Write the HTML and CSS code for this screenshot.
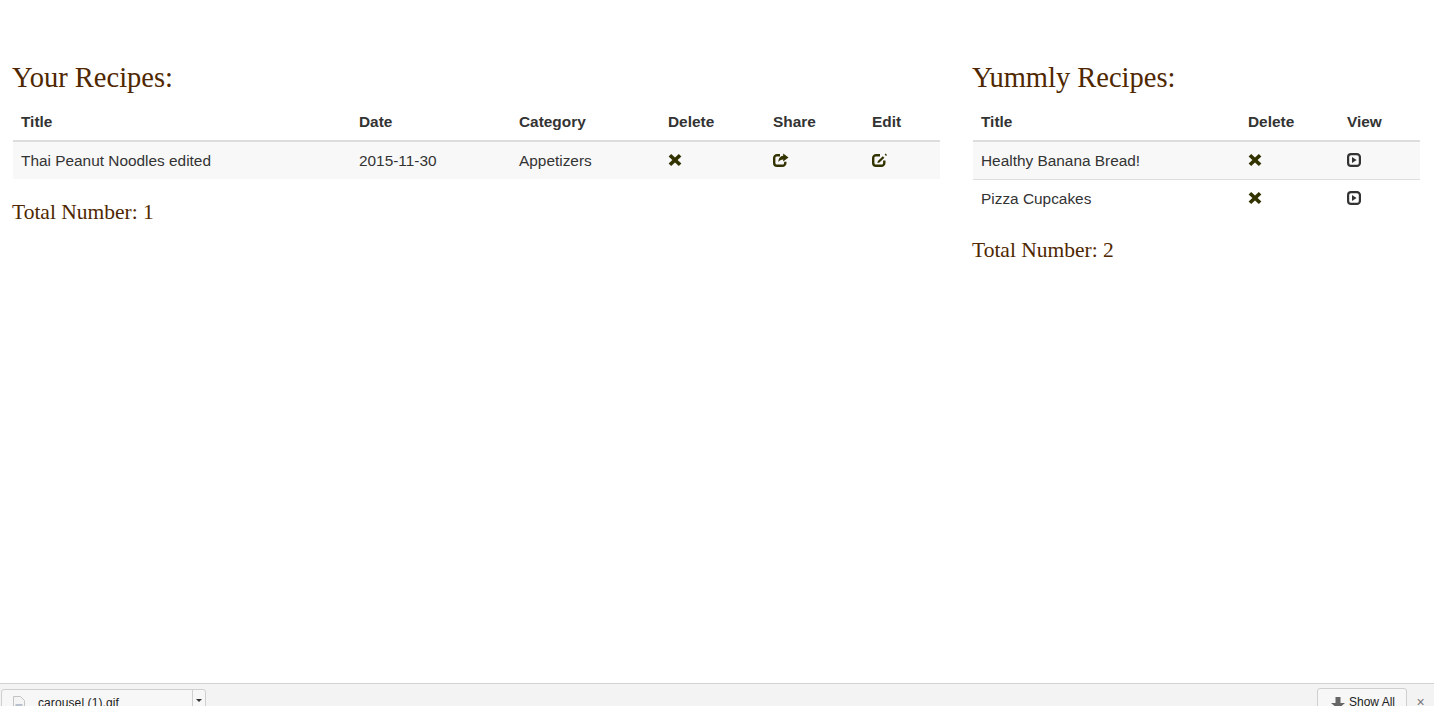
FILE: index.html
```html
<!DOCTYPE html>
<html lang="en">
<head>
<meta charset="utf-8">
<title>Recipes</title>
<link rel="stylesheet" href="styles.css">
</head>
<body>
<svg class="defs" width="0" height="0" aria-hidden="true">
  <symbol id="i-x" viewBox="0 0 14 14"><path d="M3.2 1 7 4.6 10.8 1 13.4 3.4 9.6 7l3.8 3.6-2.6 2.4L7 9.4 3.2 13 .6 10.6 4.4 7 .6 3.4z"/></symbol>
  <symbol id="i-share" viewBox="0 0 16 14"><path d="M7 2.2H4A2.8 2.8 0 0 0 1.2 5v5A2.8 2.8 0 0 0 4 12.800h5.500A2.800 2.800 0 0 0 12.300 10V8.800" fill="none" stroke="currentColor" stroke-width="2.400"/><path d="M10.200 .4 15.500 4.500 10.200 8.600V6.400C8 6.400 6.500 7.200 5.400 9 5.400 5.600 7.200 3 10.200 2.800z"/></symbol>
  <symbol id="i-edit" viewBox="0 0 16 14"><path d="M8 2.200H4A2.800 2.800 0 0 0 1.200 5v5A2.800 2.800 0 0 0 4 12.800h5.500A2.800 2.800 0 0 0 12.300 10V7.500" fill="none" stroke="currentColor" stroke-width="2.400"/><path d="M10.800 3.200 12.400 4.700 7.500 9.500 5.400 10 5.900 8z"/><path d="M13.600 .6 15 2 14 3 12.700 1.600z"/></symbol>
  <symbol id="i-view" viewBox="0 0 14 14"><rect x="1.100" y="1.100" width="11.800" height="11.800" rx="3" fill="none" stroke="currentColor" stroke-width="2.200"/><path d="M5 4 9.600 7 5 10z"/></symbol>
</svg>
<main class="page">
  <section class="panel panel-left">
    <h2 class="panel-title">Your Recipes:</h2>
    <table class="recipes">
      <colgroup><col class="c-title"><col class="c-date"><col class="c-cat"><col class="c-del"><col class="c-share"><col></colgroup>
      <thead><tr><th>Title</th><th>Date</th><th>Category</th><th>Delete</th><th>Share</th><th>Edit</th></tr></thead>
      <tbody>
        <tr class="odd">
          <td>Thai Peanut Noodles edited</td><td>2015-11-30</td><td>Appetizers</td>
          <td><svg class="icon icon-x"><use href="#i-x"/></svg></td>
          <td><svg class="icon icon-wide"><use href="#i-share"/></svg></td>
          <td><svg class="icon icon-wide"><use href="#i-edit"/></svg></td>
        </tr>
      </tbody>
    </table>
    <p class="total">Total Number: 1</p>
  </section>
  <section class="panel panel-right">
    <h2 class="panel-title">Yummly Recipes:</h2>
    <table class="recipes">
      <colgroup><col class="c-ytitle"><col class="c-ydel"><col></colgroup>
      <thead><tr><th>Title</th><th>Delete</th><th>View</th></tr></thead>
      <tbody>
        <tr class="odd">
          <td>Healthy Banana Bread!</td>
          <td><svg class="icon icon-x"><use href="#i-x"/></svg></td>
          <td><svg class="icon icon-view"><use href="#i-view"/></svg></td>
        </tr>
        <tr>
          <td>Pizza Cupcakes</td>
          <td><svg class="icon icon-x"><use href="#i-x"/></svg></td>
          <td><svg class="icon icon-view"><use href="#i-view"/></svg></td>
        </tr>
      </tbody>
    </table>
    <p class="total">Total Number: 2</p>
  </section>
</main>
<footer class="downloads">
  <div class="chip file-chip">
    <svg class="file-icon" viewBox="0 0 12 18"><path d="M.5.500h7l4 4v13H.5z" fill="#f4f4f4" stroke="#c4c4c4"/><rect x="2.500" y="8" width="7" height="7" fill="#b7c0cc"/></svg>
    <span class="file-name">carousel (1).gif</span>
    <span class="file-menu"><span class="caret"></span></span>
  </div>
  <div class="bar-right">
    <div class="chip show-all">
      <svg class="dl-icon" viewBox="0 0 14 14"><path d="M4.500 0h5v6H14L7 12 0 6h4.500z" fill="#666"/></svg>
      <span>Show All</span>
    </div>
    <span class="bar-close">×</span>
  </div>
</footer>
</body>
</html>
```
FILE: styles.css
```css
* { box-sizing: border-box; }
html, body { height: 100%; }
body {
  margin: 0;
  height: 706px;
  overflow: hidden;
  display: flex;
  flex-direction: column;
  background: #fff;
  font-family: "Liberation Sans", Arial, sans-serif;
  color: #333;
}
.defs { display: block; height: 0; }
.page {
  flex: 1;
  display: flex;
  gap: 32px;
  padding: 62px 14px 0 12px;
}
.panel-left { width: 928px; }
.panel-right { width: 448px; }
.panel-title {
  margin: 0 0 10px;
  font-family: "Liberation Serif", Georgia, serif;
  font-weight: 400;
  font-size: 28.500px;
  line-height: 31px;
  color: #4f2700;
}
.recipes {
  width: calc(100% - 1px);
  margin-left: 1px;
  border-collapse: collapse;
  table-layout: fixed;
  font-size: 15.400px;
  line-height: 21px;
}
.recipes th {
  text-align: left;
  font-weight: 700;
  padding: 8px 8px 8px;
  height: 38px;
  border-bottom: 2px solid #ddd;
}
.recipes td {
  padding: 8px;
  height: 38px;
  border-top: 1px solid #ddd;
  vertical-align: top;
}
.recipes thead + tbody tr:first-child td { border-top: 0; height: 37px; }
.recipes .odd { background: #f8f8f8; }
.c-title { width: 338px; }
.c-date { width: 160px; }
.c-cat { width: 149px; }
.c-del { width: 105px; }
.c-share { width: 99px; }
.c-ytitle { width: 267px; }
.c-ydel { width: 99px; }
.icon { display: block; fill: #333300; color: #333300; }
.icon-x { width: 14px; height: 14px; margin-top: 3px; }
.icon-wide { width: 16px; height: 14px; margin-top: 3px; }
.icon-view { width: 14px; height: 14px; margin: 3px 0 0; color: #333; fill: #333; }
.total {
  margin: 22px 0 0;
  font-family: "Liberation Serif", Georgia, serif;
  font-size: 21.500px;
  line-height: 22px;
  color: #4f2700;
}
.panel-right .total { margin-top: 21px; }
.downloads {
  flex: none;
  height: 23px;
  overflow: hidden;
  display: flex;
  justify-content: space-between;
  align-items: flex-start;
  border-top: 1px solid #d2d2d2;
  background: #f3f3f3;
  padding: 5px 0 0 1px;
  font-size: 12px;
  color: #222;
}
.chip {
  height: 30px;
  display: flex;
  background: #f7f7f7;
  border: 1px solid #cfcfcf;
  border-radius: 3px 3px 0 0;
}
.file-chip { width: 205px; padding-left: 11px; }
.file-icon { width: 12px; height: 18px; margin-top: 6px; }
.file-name { margin-left: 13px; width: 154px; line-height: 27px; letter-spacing: .1px; }
.file-menu { flex: 1; border-left: 1px solid #cfcfcf; display: flex; justify-content: center; padding-top: 9px; }
.caret { width: 0; height: 0; border: 3px solid transparent; border-top-color: #333; border-bottom: 0; }
.bar-right { display: flex; align-items: flex-start; margin-top: -1px; }
.show-all { width: 90px; padding-left: 13px; gap: 4px; line-height: 27px; font-size: 12px; }
.dl-icon { width: 14px; height: 14px; margin-top: 8px; }
.bar-close { width: 27px; text-align: center; font-size: 14px; line-height: 29px; color: #777; }
```
